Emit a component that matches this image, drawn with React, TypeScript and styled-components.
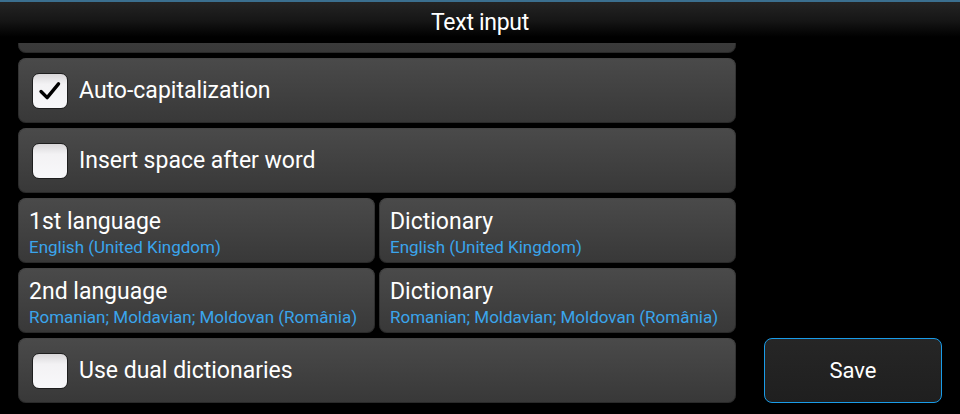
import React from "react";
import styled, { createGlobalStyle } from "styled-components";

const Global = createGlobalStyle`
  html, body { margin: 0; padding: 0; background: #000; }
  body { font-family: Roboto, "Noto Sans", "DejaVu Sans", sans-serif; color: #fff; }
  * { box-sizing: border-box; }
`;

const Screen = styled.div`
  width: 960px;
  height: 414px;
  background: #000;
  display: flex;
  flex-direction: column;
  overflow: hidden;
`;

const TitleBar = styled.div`
  height: 43px;
  flex: none;
  border-top: 2px solid #3b6f8f;
  background: linear-gradient(to bottom, #242424 0%, #161616 45%, #000 85%);
  display: flex;
  justify-content: center;
  align-items: flex-start;
  padding-top: 7px;
  font-size: 23px;
  letter-spacing: -0.3px;
  color: #fff;
`;

const Body = styled.div`
  flex: 1;
  display: flex;
  padding-left: 18px;
  min-height: 0;
`;

const Viewport = styled.div`
  width: 718px;
  flex: none;
  overflow: hidden;
`;

const List = styled.div`
  margin-top: -55px;
  display: flex;
  flex-direction: column;
  gap: 5px;
`;

const Panel = styled.div`
  height: 65px;
  border-radius: 8px;
  background: linear-gradient(to bottom, #4a4a4a 0%, #424242 45%, #383838 100%);
  box-shadow: inset 0 1px 0 rgba(255, 255, 255, 0.08), inset 0 0 0 1px rgba(0, 0, 0, 0.25);
`;

const CheckRow = styled(Panel)`
  display: flex;
  align-items: center;
  padding-left: 14px;
  gap: 11px;
`;

const Box = styled.div`
  width: 36px;
  height: 36px;
  border-radius: 7px;
  border: 1.5px solid #1e1e1e;
  background: linear-gradient(to bottom, #d9d7d9 0%, #f3f2f4 30%, #f8f8fa 100%);
  display: flex;
  align-items: center;
  justify-content: center;
`;

const Label = styled.span`
  font-size: 23px;
  color: #fff;
`;

const PairRow = styled.div`
  display: grid;
  grid-template-columns: 1fr 1fr;
  gap: 4px;
`;

const Picker = styled(Panel)`
  display: flex;
  flex-direction: column;
  padding: 10px 11px 0;
`;

const PickerTitle = styled.div`
  font-size: 23px;
  line-height: 28px;
  color: #fff;
`;

const PickerValue = styled.div`
  font-size: 17px;
  line-height: 22px;
  color: #3aa5ec;
  white-space: nowrap;
`;

const Side = styled.div`
  flex: 1;
  display: flex;
  flex-direction: column;
  justify-content: flex-end;
  padding: 0 18px 11px 28px;
`;

const SaveButton = styled.button`
  height: 65px;
  width: 178px;
  border-radius: 8px;
  border: 1.5px solid #1a9ce8;
  background: linear-gradient(to bottom, #262626 0%, #1f1f1f 100%);
  color: #fff;
  font-family: inherit;
  font-size: 22px;
  padding: 0;
`;

const Check = () => (
  <svg width="36" height="36" viewBox="0 0 36 36">
    <path d="M8.5 18.5 L15 25 L27 10.5" fill="none" stroke="#000" strokeWidth="3.6" strokeLinecap="round" strokeLinejoin="round" />
  </svg>
);

const CheckItem = ({ checked, label }: { checked?: boolean; label: string }) => (
  <CheckRow>
    <Box>{checked && <Check />}</Box>
    <Label>{label}</Label>
  </CheckRow>
);

const PickerItem = ({ title, value }: { title: string; value: string }) => (
  <Picker>
    <PickerTitle>{title}</PickerTitle>
    <PickerValue>{value}</PickerValue>
  </Picker>
);

export default function App() {
  return (
    <>
      <Global />
      <Screen>
        <TitleBar>Text input</TitleBar>
        <Body>
          <Viewport>
            <List>
              <Panel />
              <CheckItem checked label="Auto-capitalization" />
              <CheckItem label="Insert space after word" />
              <PairRow>
                <PickerItem title="1st language" value="English (United Kingdom)" />
                <PickerItem title="Dictionary" value="English (United Kingdom)" />
              </PairRow>
              <PairRow>
                <PickerItem title="2nd language" value="Romanian; Moldavian; Moldovan (România)" />
                <PickerItem title="Dictionary" value="Romanian; Moldavian; Moldovan (România)" />
              </PairRow>
              <CheckItem label="Use dual dictionaries" />
            </List>
          </Viewport>
          <Side>
            <SaveButton>Save</SaveButton>
          </Side>
        </Body>
      </Screen>
    </>
  );
}
